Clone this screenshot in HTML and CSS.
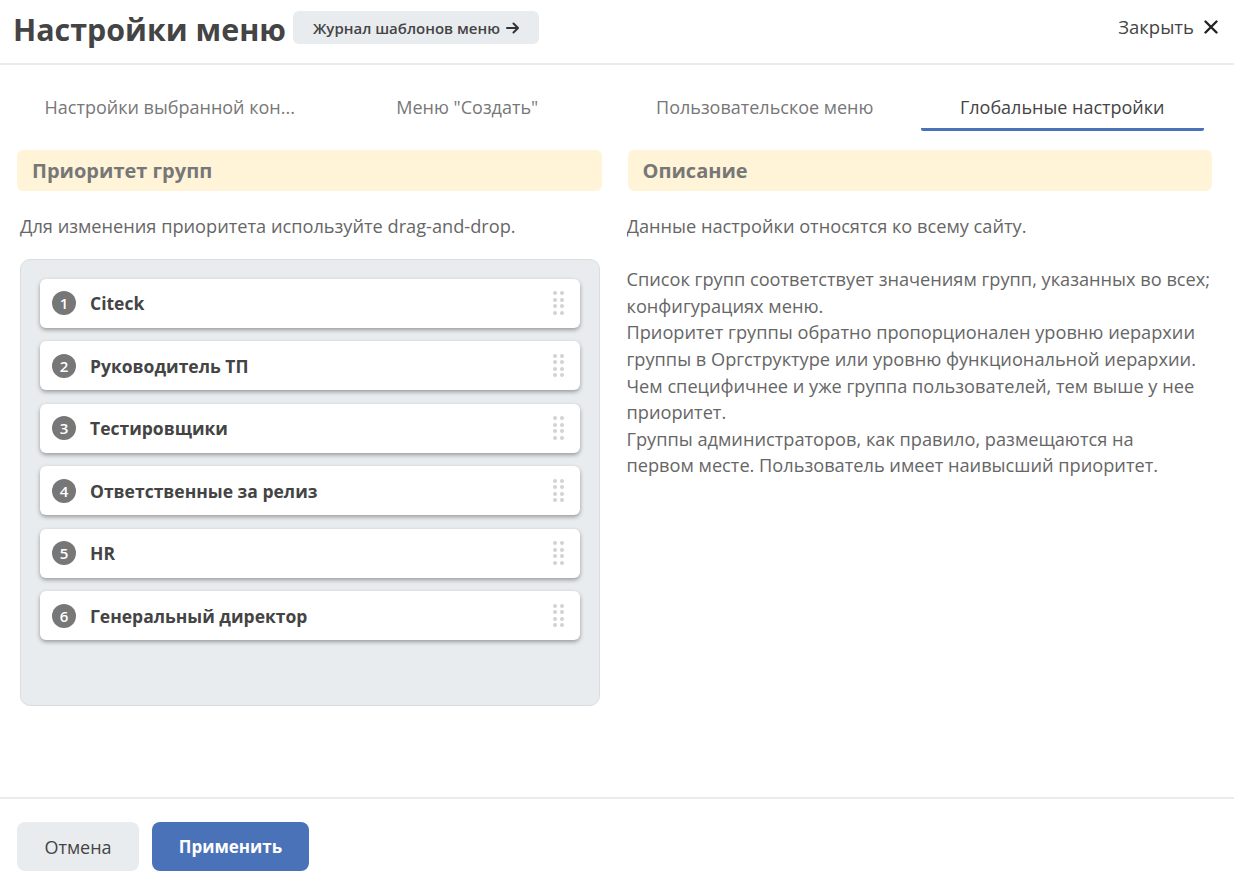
FILE: index.html
```html
<!DOCTYPE html>
<html lang="ru">
<head>
<meta charset="utf-8">
<title>Настройки меню</title>
<link rel="stylesheet" href="styles.css">
</head>
<body>
<div class="page">
  <header class="header">
    <div class="header-left">
      <h1 class="title">Настройки меню</h1>
      <button class="journal-btn">Журнал шаблонов меню <svg class="arrow" width="14" height="12" viewBox="0 0 14 12"><path d="M1 6 H12 M7.5 1.5 L12 6 L7.5 10.5" fill="none" stroke="#333" stroke-width="2" stroke-linecap="round" stroke-linejoin="round"/></svg></button>
    </div>
    <button class="close-btn">Закрыть
      <svg class="close-icon" width="14" height="14" viewBox="0 0 14 14"><path d="M1.5 1.5 L12.5 12.5 M12.5 1.5 L1.5 12.5" stroke="#222" stroke-width="2.4" stroke-linecap="round"/></svg>
    </button>
  </header>

  <nav class="tabs">
    <div class="tab">Настройки выбранной кон...</div>
    <div class="tab">Меню "Создать"</div>
    <div class="tab">Пользовательское меню</div>
    <div class="tab tab-active">Глобальные настройки</div>
  </nav>

  <main class="content">
    <section class="column">
      <div class="panel-head">Приоритет групп</div>
      <p class="hint">Для изменения приоритета используйте drag-and-drop.</p>
      <div class="list">
        <div class="item"><span class="num">1</span><span class="label">Citeck</span><span class="grip"><i></i><i></i><i></i><i></i><i></i><i></i><i></i><i></i></span></div>
        <div class="item"><span class="num">2</span><span class="label">Руководитель ТП</span><span class="grip"><i></i><i></i><i></i><i></i><i></i><i></i><i></i><i></i></span></div>
        <div class="item"><span class="num">3</span><span class="label">Тестировщики</span><span class="grip"><i></i><i></i><i></i><i></i><i></i><i></i><i></i><i></i></span></div>
        <div class="item"><span class="num">4</span><span class="label">Ответственные за релиз</span><span class="grip"><i></i><i></i><i></i><i></i><i></i><i></i><i></i><i></i></span></div>
        <div class="item"><span class="num">5</span><span class="label">HR</span><span class="grip"><i></i><i></i><i></i><i></i><i></i><i></i><i></i><i></i></span></div>
        <div class="item"><span class="num">6</span><span class="label">Генеральный директор</span><span class="grip"><i></i><i></i><i></i><i></i><i></i><i></i><i></i><i></i></span></div>
      </div>
    </section>
    <section class="column">
      <div class="panel-head">Описание</div>
      <div class="desc">
        <p>Данные настройки относятся ко всему сайту.</p>
        <p>Список групп соответствует значениям групп, указанных во всех;<br>конфигурациях меню.<br>Приоритет группы обратно пропорционален уровню иерархии<br>группы в Оргструктуре или уровню функциональной иерархии.<br>Чем специфичнее и уже группа пользователей, тем выше у нее<br>приоритет.<br>Группы администраторов, как правило, размещаются на<br>первом месте. Пользователь имеет наивысший приоритет.</p>
      </div>
    </section>
  </main>

  <footer class="footer">
    <button class="btn btn-cancel">Отмена</button>
    <button class="btn btn-apply">Применить</button>
  </footer>
</div>
</body>
</html>
```

FILE: styles.css
```css
* { box-sizing: border-box; }
html, body { margin: 0; padding: 0; background: #fff; }
body {
  font-family: "Open Sans", "Noto Sans", sans-serif;
  color: #444;
  width: 1234px;
  height: 893px;
  overflow: hidden;
}
.page { display: flex; flex-direction: column; height: 893px; }

.header {
  height: 65px;
  display: flex;
  align-items: center;
  justify-content: space-between;
  padding: 0 16px 0 13px;
  border-bottom: 2px solid #e8ecef;
}
.header-left { display: flex; align-items: center; }
.title {
  margin: 0 7px 0 0;
  font-size: 30.4px;
  font-weight: 700;
  color: #444;
  line-height: 40px;
  position: relative;
  top: -2px;
}
.journal-btn {
  font-family: inherit;
  border: 0;
  background: #e8ecef;
  border-radius: 6px;
  height: 33px;
  padding: 0 19px 0 20px;
  font-size: 15px;
  font-weight: 600;
  color: #444;
  display: flex;
  align-items: center;
  gap: 6px;
  position: relative;
  top: -4px;
}
.close-btn {
  font-family: inherit;
  border: 0;
  background: none;
  font-size: 18.5px;
  color: #444;
  display: flex;
  align-items: center;
  gap: 10px;
  padding: 0;
  position: relative;
  top: -5px;
}

.tabs {
  display: flex;
  gap: 14px;
  padding: 22px 30px 0 28px;
}
.tab {
  width: 284px;
  height: 44px;
  border-bottom: 3px solid transparent;
  text-align: center;
  font-size: 18px;
  line-height: 41px;
  color: #777;
  white-space: nowrap;
  border-radius: 2px;
}
.tab-active { color: #444; border-bottom-color: #4a72b8; }

.content {
  flex: 1;
  display: flex;
  gap: 26px;
  padding: 19px 22px 0 17px;
}
.column { width: 585px; display: flex; flex-direction: column; }
.panel-head {
  height: 41px;
  background: #fff4d8;
  border-radius: 6px;
  padding-left: 15px;
  font-size: 20px;
  font-weight: 700;
  color: #777;
  line-height: 41px;
}
.hint {
  margin: 22px 0 0 3px;
  font-size: 18.2px;
  line-height: 26.6px;
  color: #666;
  white-space: nowrap;
}
.list {
  margin: 19px 2px 0 3px;
  height: 447px;
  background: #e8ecef;
  border: 1px solid #d8dee2;
  border-radius: 10px;
  padding: 19px 19px;
  display: flex;
  flex-direction: column;
  gap: 13.5px;
}
.item {
  height: 49px;
  background: #fff;
  border-radius: 6px;
  box-shadow: 0 2px 4px rgba(0,0,0,0.35);
  display: flex;
  align-items: center;
  padding: 0 16px 0 12px;
}
.num {
  width: 24px;
  height: 24px;
  border-radius: 50%;
  background: #777;
  color: #fff;
  font-size: 15px;
  font-weight: 600;
  display: flex;
  align-items: center;
  justify-content: center;
  margin-right: 14px;
}
.label { flex: 1; font-size: 17.5px; font-weight: 700; color: #444; }
.grip {
  display: grid;
  grid-template-columns: 4px 4px;
  column-gap: 3px;
  row-gap: 2.5px;
}
.grip i { width: 4px; height: 4px; border-radius: 50%; background: #d3d3d3; display: block; }

.desc {
  margin: 22px 0 0 -1px;
  font-size: 18.2px;
  line-height: 26.6px;
  color: #666;
  white-space: nowrap;
  overflow: hidden;
  width: 582px;
}
.desc p { margin: 0 0 26.6px 0; }

.footer {
  height: 96px;
  border-top: 2px solid #e8ecef;
  padding: 23px 17px 0 17px;
  display: flex;
  gap: 13px;
  align-items: flex-start;
}
.btn {
  font-family: inherit;
  border: 0;
  height: 49px;
  border-radius: 8px;
  font-size: 18px;
}
.btn-cancel { width: 122px; background: #e8ecef; color: #444; }
.btn-apply { width: 157px; background: #4a72b8; color: #fff; font-weight: 700; font-size: 17px; }
```
